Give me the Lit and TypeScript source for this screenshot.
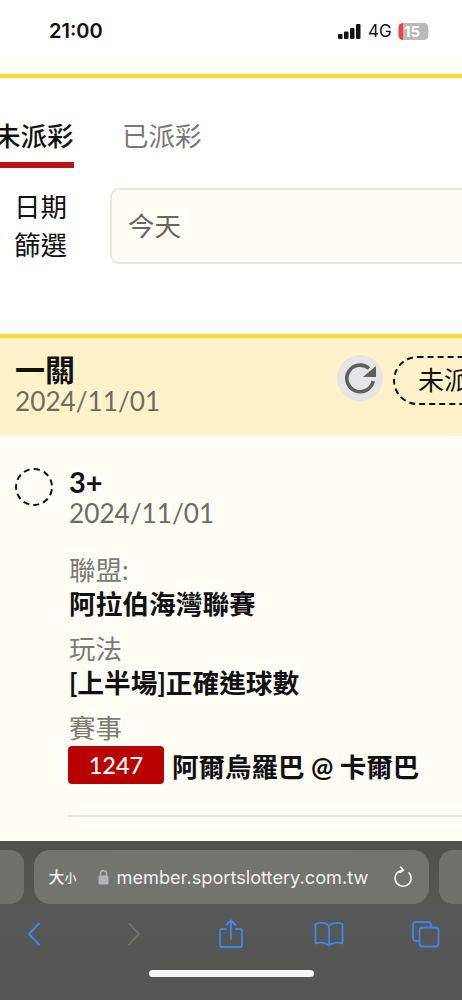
import { LitElement, html, css } from "lit";
import { customElement } from "lit/decorators.js";

@customElement("app-root")
export class AppRoot extends LitElement {
  static styles = css`
    :host { display: flex; flex-direction: column; width: 462px; height: 1000px; overflow: hidden; background: #fff; font-family: Lato, "Noto Sans CJK TC", sans-serif; color: #000; }
    * { box-sizing: border-box; }
    .status { height: 56px; flex: none; display: flex; align-items: center; padding: 6px 33px 0 49px; justify-content: space-between; background: #fff; }
    .time { font: 600 20px/24px Inter, sans-serif; color: #111; }
    .sicons { display: flex; align-items: center; gap: 7px; }
    .net { font: 400 17px/20px Inter, sans-serif; color: #111; width: 23px; }
    .strip { height: 22px; flex: none; background: #fffdf6; border-bottom: 4px solid #fdd82e; }
    .page { flex: 1; min-height: 0; display: flex; flex-direction: column; background: #fff; overflow: hidden; }
    .tabs { display: flex; gap: 48px; margin-left: -6px; padding-top: 40px; height: 90px; flex: none; }
    .tab { font-size: 26.5px; line-height: 36px; color: #777; height: 50px; width: 80px; white-space: nowrap; }
    .tab.on { color: #111; font-weight: 500; border-bottom: 6px solid #bd1117; }
    .filter { display: flex; gap: 42px; padding: 20px 0 0 14px; height: 166px; flex: none; width: 560px; }
    .flabel { font-size: 26.5px; line-height: 38px; width: 54px; flex: none; color: #111; }
    .input { height: 76px; flex: 1; border: 2px solid #e9e6dc; border-radius: 9px; background: #fffdf6; font-size: 26.5px; color: #666660; display: flex; align-items: center; padding: 0 0 4px 16px; }
    .head { height: 102px; flex: none; border-top: 4px solid #fdd82e; background: #fff2ca; display: flex; justify-content: space-between; padding: 13px 0 0 15px; width: 600px; }
    .h1 { font-size: 30px; font-weight: 700; line-height: 36px; color: #111; }
    .date { font-size: 26.200px; line-height: 28px; color: #6d6c64; }
    .hright { display: flex; gap: 10px; align-items: flex-start; margin-top: 4px; width: 263px; }
    .refresh { width: 46px; height: 46px; border-radius: 50%; background: #e4e5e7; display: flex; align-items: center; justify-content: center; flex: none; }
    .chip { height: 49px; margin-top: 1px; border: 2px dashed #111; border-radius: 25px; padding-left: 23px; font-size: 26px; line-height: 45px; flex: 1; white-space: nowrap; color: #111; }
    .body { flex: 1; min-height: 0; background: #fffdf6; display: flex; gap: 16px; padding: 29px 0 0 15px; }
    .dot { width: 38px; height: 38px; border-radius: 50%; border: 2px dashed #111; flex: none; margin-top: 3px; }
    .info { flex: 1; min-width: 0; }
    .pick { font-size: 29px; font-weight: 700; line-height: 33px; color: #111; }
    .info .date { line-height: 31px; }
    .label { font-size: 26.500px; line-height: 35px; color: #7b7b74; }
    .value { font-size: 26.700px; font-weight: 700; line-height: 32px; color: #111; margin-bottom: 12px; white-space: nowrap; }
    .first { margin-top: 24px; }
    .match { display: flex; align-items: center; gap: 8px; height: 38px; font-size: 26.500px; font-weight: 700; color: #111; white-space: nowrap; }
    .badge { width: 96px; height: 38px; background: #b80000; border-radius: 4px; color: #fff; font-size: 23.500px; font-weight: 500; display: flex; align-items: center; justify-content: center; flex: none; margin-left: -1px; }
    .divider { height: 2px; background: #e9e7e0; margin-top: 31px; margin-left: -1px; }
    .bar { height: 159px; flex: none; background: linear-gradient(#50504c, #575757 45%, #555553); display: flex; flex-direction: column; align-items: center; }
    .urlrow { display: flex; gap: 10px; margin-top: 9px; height: 54px; width: 100%; justify-content: center; flex: none; }
    .side { width: 70px; flex: none; background: #70706c; border-radius: 14px; }
    .url { width: 395px; flex: none; background: linear-gradient(90deg, #74746f, #737370); border-radius: 16px; display: flex; align-items: center; padding: 0 17px 0 15px; color: #f1f1ef; }
    .aa { font: 500 16px/20px "Noto Sans CJK TC", sans-serif; width: 34px; white-space: nowrap; }
    .aa small { font-size: 12px; }
    .lock { margin-left: 15px; margin-right: 8px; display: flex; }
    .host { font: 400 18.200px/24px Inter, sans-serif; flex: 1; white-space: nowrap; color: #efefec; }
    .tools { display: flex; align-items: center; width: 100%; padding: 0 0 0 24px; height: 42px; margin-top: 9px; flex: none; }
    .tools svg { display: block; flex: none; }
    .m1 { margin-left: 80px; }
    .m2 { margin-left: 75px; }
    .m3 { margin-left: 71px; }
    .m4 { margin-left: 68px; }
    .pill { width: 165px; height: 7px; border-radius: 4px; background: #f4f4f4; margin-top: 15px; flex: none; }
  `;

  render() {
    return html`
      <div class="status">
        <span class="time">21:00</span>
        <div class="sicons">
          <svg width="23" height="15" viewBox="0 0 23 15" fill="#111"><rect x="0" y="10" width="4.5" height="5" rx="1"/><rect x="6" y="7.5" width="4.5" height="7.5" rx="1"/><rect x="12" y="4" width="4.5" height="11" rx="1"/><rect x="18" y="0" width="4.5" height="15" rx="1"/></svg>
          <span class="net">4G</span>
          <svg width="31" height="17" viewBox="0 0 31 17"><path d="M5 0h21a4 4 0 0 1 4 4v9a4 4 0 0 1-4 4H5z" fill="#b9b9b9"/><path d="M5 0a4.500 4.500 0 0 0-4.500 4.500v8a4.500 4.500 0 0 0 4.500 4.500z" fill="#f4403a"/><rect x="30.300" y="6" width="0.700" height="5" fill="#ccc"/><text x="6" y="14" font-family="Inter, sans-serif" font-size="15" font-weight="700" fill="#fff">15</text></svg>
        </div>
      </div>
      <div class="strip"></div>
      <div class="page">
        <div class="tabs">
          <div class="tab on">未派彩</div>
          <div class="tab">已派彩</div>
        </div>
        <div class="filter">
          <div class="flabel">日期<br />篩選</div>
          <div class="input">今天</div>
        </div>
        <div class="head">
          <div>
            <div class="h1">一關</div>
            <div class="date">2024/11/01</div>
          </div>
          <div class="hright">
            <div class="refresh">
              <svg width="34" height="35" viewBox="0 0 34 35"><path d="M26 7.500A13.300 13.300 0 1 0 30.200 20" fill="none" stroke="#5f5f60" stroke-width="3.600"/><path d="M33 5v11H20z" fill="#5f5f60"/></svg>
            </div>
            <div class="chip">未派彩</div>
          </div>
        </div>
        <div class="body">
          <div class="dot"></div>
          <div class="info">
            <div class="pick">3+</div>
            <div class="date">2024/11/01</div>
            <div class="label first">聯盟:</div>
            <div class="value">阿拉伯海灣聯賽</div>
            <div class="label">玩法</div>
            <div class="value">[上半場]正確進球數</div>
            <div class="label">賽事</div>
            <div class="match"><span class="badge">1247</span><span>阿爾烏羅巴 @ 卡爾巴</span></div>
            <div class="divider"></div>
          </div>
        </div>
      </div>
      <div class="bar">
        <div class="urlrow">
          <div class="side"></div>
          <div class="url">
            <span class="aa">大<small>小</small></span>
            <span class="lock"><svg width="11" height="15" viewBox="0 0 11 15"><rect x="0.500" y="5.500" width="10" height="9" rx="1.500" fill="#b4b4b8"/><path d="M2.500 6V3.700a3 3 0 0 1 6 0V6" fill="none" stroke="#b4b4b8" stroke-width="1.500"/></svg></span>
            <span class="host">member.sportslottery.com.tw</span>
            <svg width="20" height="22" viewBox="0 0 20 22" fill="none" stroke="#f1f1ef" stroke-width="1.600" stroke-linecap="round" stroke-linejoin="round"><path d="M11 4.200a8 8 0 1 0 6 2.600"/><path d="M8.500 1l3 3.200-3.500 2.300"/></svg>
          </div>
          <div class="side"></div>
        </div>
        <div class="tools">
          <svg width="20" height="26" viewBox="0 0 20 26" fill="none" stroke="#3c87ec" stroke-width="2" stroke-linecap="round" stroke-linejoin="round"><path d="M15 2.500L5 13l10 10.500"/></svg>
          <svg class="m1" width="20" height="26" viewBox="0 0 20 26" fill="none" stroke="#6f6f6f" stroke-width="2" stroke-linecap="round" stroke-linejoin="round"><path d="M5 2.500L15 13 5 23.500"/></svg>
          <svg class="m2" width="24" height="30" viewBox="0 0 24 30" fill="none" stroke="#3c87ec" stroke-width="1.800" stroke-linecap="round" stroke-linejoin="round"><path d="M7 10H3a2 2 0 0 0-2 2v14a2 2 0 0 0 2 2h18a2 2 0 0 0 2-2V12a2 2 0 0 0-2-2h-4"/><path d="M12 20V2M7.500 6L12 1.500 16.500 6"/></svg>
          <svg class="m3" width="30" height="26" viewBox="0 0 30 26" fill="none" stroke="#3c87ec" stroke-width="1.800" stroke-linecap="round" stroke-linejoin="round"><path d="M15 5C12 1.500 6 1 1.500 3v19.500C6 21 12 21.500 15 24.500 18 21.500 24 21 28.500 22.500V3C24 1 18 1.500 15 5zM15 5v19"/></svg>
          <svg class="m4" width="28" height="27" viewBox="0 0 28 27" fill="none" stroke="#3c87ec" stroke-width="1.800" stroke-linejoin="round"><path d="M7 20H4a3 3 0 0 1-3-3V4a3 3 0 0 1 3-3h12a3 3 0 0 1 3 3v2"/><rect x="7.500" y="6.500" width="19" height="19" rx="3"/></svg>
        </div>
        <div class="pill"></div>
      </div>
    `;
  }
}
